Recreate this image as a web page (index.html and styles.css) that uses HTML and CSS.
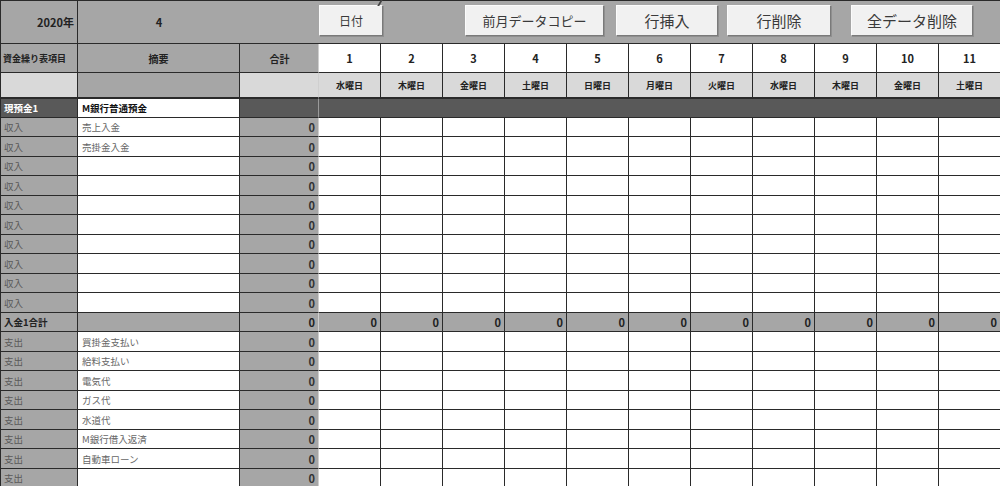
FILE: index.html
```html
<!DOCTYPE html>
<html lang="ja">
<head>
<meta charset="utf-8">
<title>資金繰り表</title>
<link rel="stylesheet" href="styles.css">
</head>
<body>
<div class="sheet">
  <div class="top">
    <div class="t-year">2020年</div>
    <div class="t-month">4</div>
    <div class="t-gap"></div>
    <button class="btn btn-date">日付</button>
    <span class="mark"></span>
    <button class="btn btn-copy">前月データコピー</button>
    <button class="btn btn-ins">行挿入</button>
    <button class="btn btn-del">行削除</button>
    <button class="btn btn-all">全データ削除</button>
  </div>
  <div class="grid">
    <div class="h2 ha">資金繰り表項目</div><div class="h2 hb">摘要</div><div class="h2 hc">合計</div>
    <div class="day">1</div><div class="day">2</div><div class="day">3</div><div class="day">4</div><div class="day">5</div><div class="day">6</div><div class="day">7</div><div class="day">8</div><div class="day">9</div><div class="day">10</div><div class="day">11</div>

    <div class="w-a"></div><div class="w-b"></div><div class="w-c"></div>
    <div class="wd">水曜日</div><div class="wd">木曜日</div><div class="wd">金曜日</div><div class="wd">土曜日</div><div class="wd">日曜日</div><div class="wd">月曜日</div><div class="wd">火曜日</div><div class="wd">水曜日</div><div class="wd">木曜日</div><div class="wd">金曜日</div><div class="wd">土曜日</div>

    <div class="k-a">現預金1</div><div class="k-b">M銀行普通預金</div><div class="k-c"></div><div class="k-rest"></div>

    <div class="a">収入</div><div class="b">売上入金</div><div class="c">0</div><div class="d"></div><div class="d"></div><div class="d"></div><div class="d"></div><div class="d"></div><div class="d"></div><div class="d"></div><div class="d"></div><div class="d"></div><div class="d"></div><div class="d"></div>
    <div class="a">収入</div><div class="b">売掛金入金</div><div class="c">0</div><div class="d"></div><div class="d"></div><div class="d"></div><div class="d"></div><div class="d"></div><div class="d"></div><div class="d"></div><div class="d"></div><div class="d"></div><div class="d"></div><div class="d"></div>
    <div class="a">収入</div><div class="b"></div><div class="c">0</div><div class="d"></div><div class="d"></div><div class="d"></div><div class="d"></div><div class="d"></div><div class="d"></div><div class="d"></div><div class="d"></div><div class="d"></div><div class="d"></div><div class="d"></div>
    <div class="a">収入</div><div class="b"></div><div class="c">0</div><div class="d"></div><div class="d"></div><div class="d"></div><div class="d"></div><div class="d"></div><div class="d"></div><div class="d"></div><div class="d"></div><div class="d"></div><div class="d"></div><div class="d"></div>
    <div class="a">収入</div><div class="b"></div><div class="c">0</div><div class="d"></div><div class="d"></div><div class="d"></div><div class="d"></div><div class="d"></div><div class="d"></div><div class="d"></div><div class="d"></div><div class="d"></div><div class="d"></div><div class="d"></div>
    <div class="a">収入</div><div class="b"></div><div class="c">0</div><div class="d"></div><div class="d"></div><div class="d"></div><div class="d"></div><div class="d"></div><div class="d"></div><div class="d"></div><div class="d"></div><div class="d"></div><div class="d"></div><div class="d"></div>
    <div class="a">収入</div><div class="b"></div><div class="c">0</div><div class="d"></div><div class="d"></div><div class="d"></div><div class="d"></div><div class="d"></div><div class="d"></div><div class="d"></div><div class="d"></div><div class="d"></div><div class="d"></div><div class="d"></div>
    <div class="a">収入</div><div class="b"></div><div class="c">0</div><div class="d"></div><div class="d"></div><div class="d"></div><div class="d"></div><div class="d"></div><div class="d"></div><div class="d"></div><div class="d"></div><div class="d"></div><div class="d"></div><div class="d"></div>
    <div class="a">収入</div><div class="b"></div><div class="c">0</div><div class="d"></div><div class="d"></div><div class="d"></div><div class="d"></div><div class="d"></div><div class="d"></div><div class="d"></div><div class="d"></div><div class="d"></div><div class="d"></div><div class="d"></div>
    <div class="a">収入</div><div class="b"></div><div class="c">0</div><div class="d"></div><div class="d"></div><div class="d"></div><div class="d"></div><div class="d"></div><div class="d"></div><div class="d"></div><div class="d"></div><div class="d"></div><div class="d"></div><div class="d"></div>

    <div class="s-a">入金1合計</div><div class="s-b"></div><div class="s-c">0</div><div class="s-d">0</div><div class="s-d">0</div><div class="s-d">0</div><div class="s-d">0</div><div class="s-d">0</div><div class="s-d">0</div><div class="s-d">0</div><div class="s-d">0</div><div class="s-d">0</div><div class="s-d">0</div><div class="s-d">0</div>

    <div class="a">支出</div><div class="b">買掛金支払い</div><div class="c">0</div><div class="d"></div><div class="d"></div><div class="d"></div><div class="d"></div><div class="d"></div><div class="d"></div><div class="d"></div><div class="d"></div><div class="d"></div><div class="d"></div><div class="d"></div>
    <div class="a">支出</div><div class="b">給料支払い</div><div class="c">0</div><div class="d"></div><div class="d"></div><div class="d"></div><div class="d"></div><div class="d"></div><div class="d"></div><div class="d"></div><div class="d"></div><div class="d"></div><div class="d"></div><div class="d"></div>
    <div class="a">支出</div><div class="b">電気代</div><div class="c">0</div><div class="d"></div><div class="d"></div><div class="d"></div><div class="d"></div><div class="d"></div><div class="d"></div><div class="d"></div><div class="d"></div><div class="d"></div><div class="d"></div><div class="d"></div>
    <div class="a">支出</div><div class="b">ガス代</div><div class="c">0</div><div class="d"></div><div class="d"></div><div class="d"></div><div class="d"></div><div class="d"></div><div class="d"></div><div class="d"></div><div class="d"></div><div class="d"></div><div class="d"></div><div class="d"></div>
    <div class="a">支出</div><div class="b">水道代</div><div class="c">0</div><div class="d"></div><div class="d"></div><div class="d"></div><div class="d"></div><div class="d"></div><div class="d"></div><div class="d"></div><div class="d"></div><div class="d"></div><div class="d"></div><div class="d"></div>
    <div class="a">支出</div><div class="b">M銀行借入返済</div><div class="c">0</div><div class="d"></div><div class="d"></div><div class="d"></div><div class="d"></div><div class="d"></div><div class="d"></div><div class="d"></div><div class="d"></div><div class="d"></div><div class="d"></div><div class="d"></div>
    <div class="a">支出</div><div class="b">自動車ローン</div><div class="c">0</div><div class="d"></div><div class="d"></div><div class="d"></div><div class="d"></div><div class="d"></div><div class="d"></div><div class="d"></div><div class="d"></div><div class="d"></div><div class="d"></div><div class="d"></div>
    <div class="a">支出</div><div class="b"></div><div class="c">0</div><div class="d"></div><div class="d"></div><div class="d"></div><div class="d"></div><div class="d"></div><div class="d"></div><div class="d"></div><div class="d"></div><div class="d"></div><div class="d"></div><div class="d"></div>
  </div>
</div>
</body>
</html>
```

FILE: styles.css
```css
* { box-sizing: border-box; }
html, body {
  margin: 0;
  padding: 0;
  width: 1000px;
  height: 486px;
  overflow: hidden;
  background: #ffffff;
}
body {
  font-family: "Noto Sans CJK JP", "Noto Sans", sans-serif;
  color: #333;
}
.sheet {
  width: 1000px;
  overflow: hidden;
  border-left: 1px solid #2a2a2a;
}

/* top bar */
.top {
  display: flex;
  align-items: flex-start;
  height: 44px;
  width: 1100px;
  background: #a6a6a6;
  border-top: 1px solid #2a2a2a;
  border-bottom: 1px solid #2a2a2a;
}
.t-year {
  width: 77px;
  height: 42px;
  border-right: 1px solid #2a2a2a;
  display: flex;
  align-items: center;
  justify-content: flex-end;
  padding-right: 3px;
  font-size: 11px;
  font-weight: 700;
  color: #222;
}
.t-month {
  width: 162px;
  height: 42px;
  display: flex;
  align-items: center;
  justify-content: center;
  font-size: 11px;
  font-weight: 700;
  color: #222;
}
.t-gap { width: 79px; }
.btn {
  margin-top: 4px;
  height: 31px;
  padding: 0;
  font-family: "Noto Sans CJK JP", "Noto Sans", sans-serif;
  color: #3a3a3a;
  background: #f1f1f1;
  border: 1px solid;
  border-color: #fbfbfb #7a7a7a #7a7a7a #fbfbfb;
  box-shadow: 1px 1px 0 #8f8f8f;
  display: flex;
  align-items: center;
  justify-content: center;
}
.btn-date { width: 64px; font-size: 12px; }
.mark {
  width: 2px;
  height: 6px;
  background: #444;
  margin-left: -4px;
  margin-top: -1px;
  transform: skewX(-30deg);
}
.btn-copy { width: 139px; margin-left: 84px; font-size: 13px; }
.btn-ins { width: 102px; margin-left: 12px; font-size: 15px; }
.btn-del { width: 104px; margin-left: 9px; font-size: 15px; }
.btn-all { width: 122px; margin-left: 20px; font-size: 15px; }

/* grid */
.grid {
  display: grid;
  width: 1100px;
  grid-template-columns: 77px 162px 79px repeat(11, 62px);
  grid-template-rows: 29px 25px 20px repeat(9, 19px 20px) 19px;
}
.grid > div {
  border-right: 1px solid #2a2a2a;
  border-bottom: 1px solid #2a2a2a;
  display: flex;
  align-items: center;
  overflow: hidden;
  white-space: nowrap;
}

.h2 { background: #a6a6a6; font-weight: 700; color: #222; }
.ha { font-size: 9px; padding-left: 2px; }
.hb { font-size: 10px; justify-content: center; }
.hc { font-size: 10px; justify-content: center; padding-left: 1px; border-right-color: #cfcfcf !important; }
.day {
  background: #fff;
  justify-content: center;
  font-size: 11px;
  font-weight: 700;
  color: #222;
}

.w-a { background: #d9d9d9; }
.w-b { background: #a6a6a6; }
.w-c { background: #d9d9d9; border-right-color: #cfcfcf !important; }
.wd {
  background: #d9d9d9;
  justify-content: center;
  font-size: 9px;
  font-weight: 700;
  color: #222;
}

.k-a {
  background: #595959;
  color: #fff;
  font-size: 9.5px;
  font-weight: 700;
  padding-left: 3px;
  border-top: 1px solid #2a2a2a;
}
.k-b {
  background: #fff;
  color: #111;
  font-size: 9.5px;
  font-weight: 700;
  padding-left: 4px;
  border-top: 1px solid #2a2a2a;
}
.k-c { background: #595959; border-right-color: #9a9a9a !important; border-top: 1px solid #2a2a2a; }
.k-rest { background: #595959; grid-column: span 11; border-top: 1px solid #2a2a2a; }

.a {
  background: #a6a6a6;
  color: #595959;
  font-size: 9.5px;
  padding-left: 3px;
}
.b {
  background: #fff;
  color: #666;
  font-size: 9.5px;
  padding-left: 4px;
}
.c {
  background: #a6a6a6;
  justify-content: flex-end;
  padding-right: 3px;
  font-size: 11px;
  font-weight: 700;
  color: #333;
  border-right-color: #cfcfcf !important;
}
.d { background: #fff; }

.s-a, .s-b, .s-c, .s-d { background: #a6a6a6; color: #222; }
.s-a { font-size: 9.5px; font-weight: 700; padding-left: 3px; }
.s-c, .s-d {
  justify-content: flex-end;
  padding-right: 3px;
  font-size: 11px;
  font-weight: 700;
}
.s-c { border-right-color: #cfcfcf !important; }
```
